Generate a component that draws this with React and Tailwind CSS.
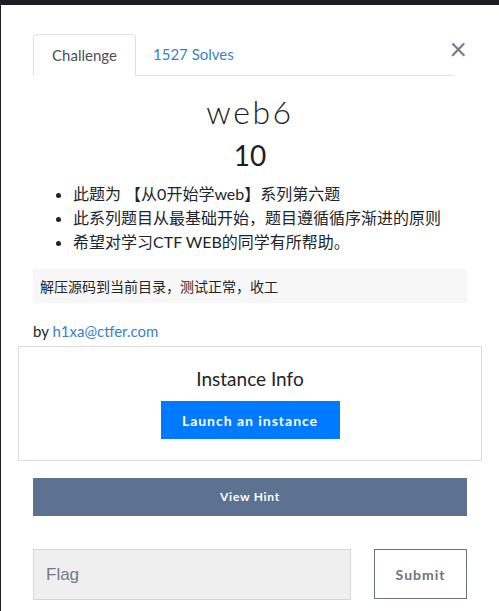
export default function App() {
  const items = [
    '此题为 【从0开始学web】系列第六题',
    '此系列题目从最基础开始，题目遵循循序渐进的原则',
    '希望对学习CTF WEB的同学有所帮助。',
  ];

  return (
    <div
      className="w-[499px] h-[611px] overflow-hidden bg-[#1c1e22] pt-[5px] pl-[1px]"
      style={{ fontFamily: 'Lato, "Noto Sans CJK SC", sans-serif' }}
    >
      <div className="relative bg-white h-[606px] px-[32px] pt-[29px] text-[#212529]">
        <button className="absolute right-[32px] top-[28px] text-[#7a7a7a] text-[30px] leading-none">
          ×
        </button>

        <div className="flex border-b border-[#dee2e6] mr-[14px]">
          <div className="-mb-px h-[42px] w-[103px] flex items-center justify-center border border-[#dee2e6] border-b-white rounded-t-[4px] text-[15px] text-[#495057]">
            Challenge
          </div>
          <div className="h-[41px] px-[17px] flex items-center text-[15px] text-[#3a82c4]">
            1527 Solves
          </div>
        </div>

        <h2 className="mt-[16px] text-center text-[32px] leading-[40px] font-light tracking-[0.08em] text-[#1e1e1e]">
          web6
        </h2>
        <h3 className="mt-[6px] text-center text-[28px] leading-[34px] text-[#1e1e1e]">10</h3>

        <ul className="mt-[10px] pl-[40px] list-disc text-[16px] leading-[24px]">
          {items.map((t) => (
            <li key={t}>{t}</li>
          ))}
        </ul>

        <div className="mt-[15px] h-[34px] bg-[#f7f7f7] px-[7px] flex items-center text-[14px]">
          解压源码到当前目录，测试正常，收工
        </div>

        <p className="mt-[18px] text-[15px] leading-[20px]">
          by <span className="text-[#3a82c4]">h1xa@ctfer.com</span>
        </p>

        <div className="-mx-[15px] mt-[5px] h-[115px] border border-[#dcdcdc] flex flex-col items-center">
          <div className="mt-[20px] text-[19px] leading-[24px]">Instance Info</div>
          <button className="mt-[10px] w-[179px] h-[38px] bg-[#007bff] text-white text-[14px] font-bold tracking-[0.07em]">
            Launch an instance
          </button>
        </div>

        <button className="mt-[17px] w-full h-[38px] bg-[#5c7290] text-white text-[12px] font-bold tracking-[0.06em]">
          View Hint
        </button>

        <div className="mt-[33px] flex gap-[23px]">
          <input
            placeholder="Flag"
            className="w-[318px] h-[51px] bg-[#efefef] border border-[#d3d7dc] px-[12px] text-[17px] placeholder-[#707b86] outline-none"
            style={{ fontFamily: '"Liberation Sans", Arial, sans-serif' }}
          />
          <button className="w-[93px] h-[50px] border border-[#6c757d] text-[#6c757d] text-[14px] font-bold tracking-[0.07em]">
            Submit
          </button>
        </div>
      </div>
    </div>
  );
}
